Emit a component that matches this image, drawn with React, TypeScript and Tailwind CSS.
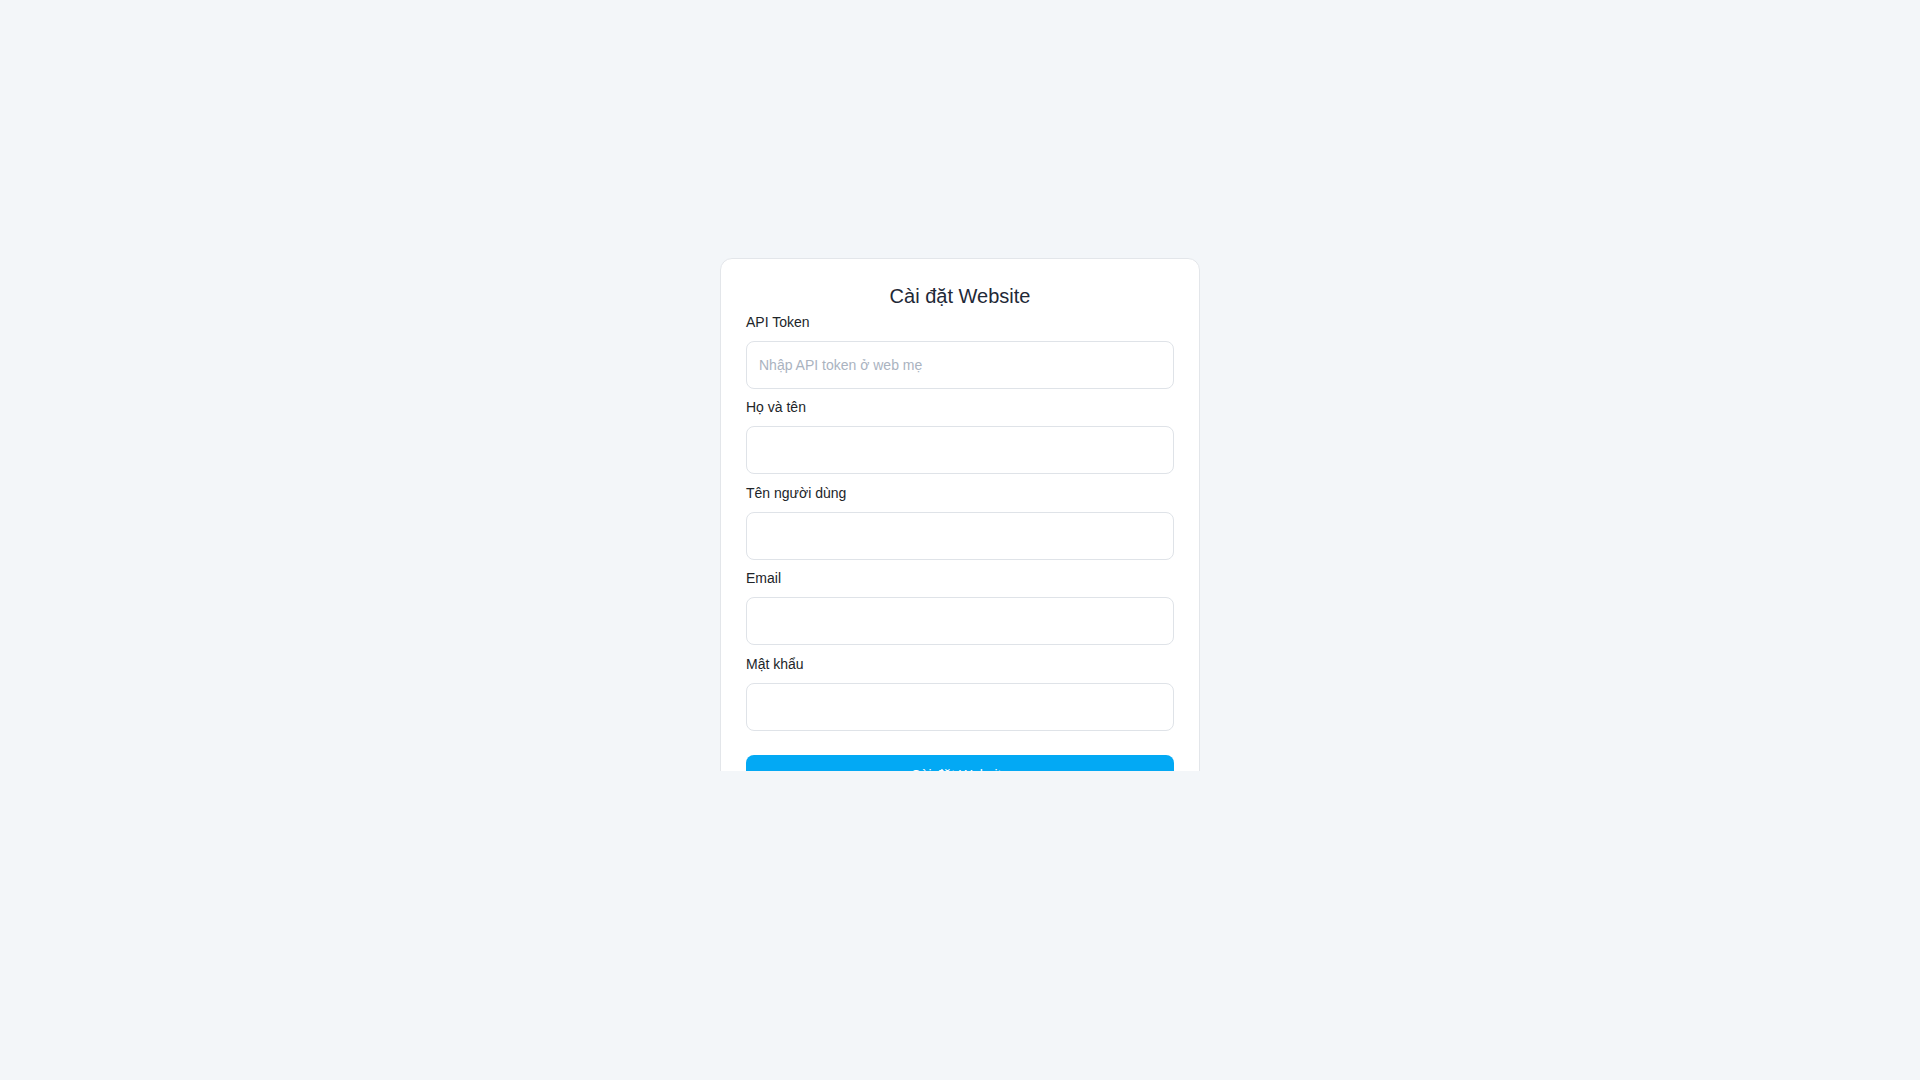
const fields = [
  { label: 'API Token', type: 'text', placeholder: 'Nhập API token ở web mẹ' },
  { label: 'Họ và tên', type: 'text', placeholder: '' },
  { label: 'Tên người dùng', type: 'text', placeholder: '' },
  { label: 'Email', type: 'email', placeholder: '' },
  { label: 'Mật khẩu', type: 'password', placeholder: '' },
];

const App = () => {
  return (
    <div className="min-h-screen bg-[#f3f6f9] flex items-center justify-center font-['Liberation_Sans',Arial,sans-serif]">
      {/* full card height, the visible part is clipped below */}
      <div className="w-[480px] h-[565px]">
        <div className="h-[513px] overflow-hidden">
          <div className="bg-white border border-[#e3e6ea] rounded-xl px-[25px] pt-[23px] pb-6">
            <h1 className="text-xl leading-7 text-center text-[#1f2937] mb-0.5">Cài đặt Website</h1>
            <form className="flex flex-col gap-[8.5px]" onSubmit={(e) => e.preventDefault()}>
              {fields.map((f) => (
                <div key={f.label}>
                  <label className="block text-sm leading-5 text-[#212529] mb-[9px]">{f.label}</label>
                  <input
                    type={f.type}
                    placeholder={f.placeholder}
                    className="w-full h-12 px-3 text-sm text-[#212529] bg-white border border-[#dfe3e8] rounded-lg outline-none placeholder:text-[#aab3bf]"
                  />
                </div>
              ))}
              <button
                type="submit"
                className="mt-4 w-full py-2.5 text-sm leading-5 text-white bg-[#03a9f4] rounded-lg"
              >
                Cài đặt Website
              </button>
            </form>
          </div>
        </div>
      </div>
    </div>
  );
};

export default App;
